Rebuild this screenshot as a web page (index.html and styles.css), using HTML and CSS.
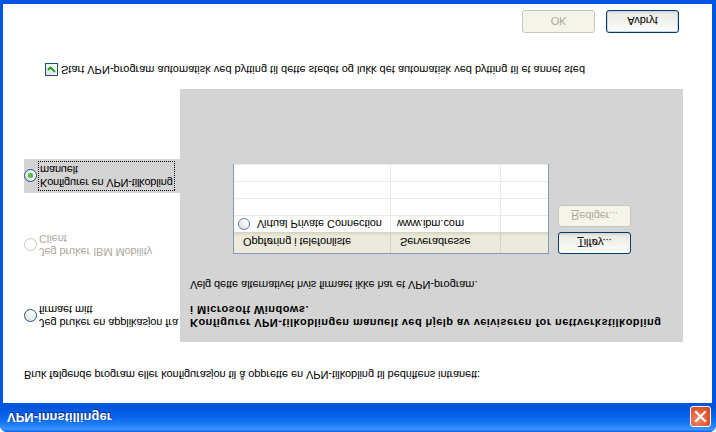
FILE: index.html
```html
<!DOCTYPE html>
<html>
<head>
<meta charset="utf-8">
<title>VPN-innstillinger</title>
<link rel="stylesheet" href="styles.css">
</head>
<body>
<div class="window">
  <div class="titlebar">
    <span class="title">VPN-innstillinger</span>
    <span class="close">
      <svg width="21" height="21" viewBox="0 0 21 21">
        <path d="M6 6 L15 15 M15 6 L6 15" stroke="#fff" stroke-width="2.2" stroke-linecap="square"/>
      </svg>
    </span>
  </div>
  <div class="content">
    <p class="intro">Bruk følgende program eller konfigurasjon til å opprette en VPN-tilkobling til bedriftens intranett:</p>
    <div class="main">
      <div class="options">
        <div class="opt opt1"><span class="radio"></span><span class="opt-text">Jeg bruker en applikasjon fra<br>firmaet mitt</span></div>
        <div class="opt opt2 disabled"><span class="radio"></span><span class="opt-text">Jeg bruker IBM Mobility<br>Client</span></div>
        <div class="opt opt3 selected"><span class="radio checked"></span><span class="opt-text focus">Konfigurer en VPN-tilkobling<br>manuelt</span></div>
      </div>
      <div class="panel">
        <p class="panel-title">Konfigurer VPN-tilkoblingen manuelt ved hjelp av veiviseren for nettverkstilkobling<br>i Microsoft Windows.</p>
        <p class="panel-desc">Velg dette alternativet hvis firmaet ikke har et VPN-program.</p>
        <div class="list-row">
          <div class="table">
            <div class="tr th">
              <div class="c c1">Oppføring i telefonliste</div>
              <div class="c c2">Serveradresse</div>
              <div class="c c3"></div>
            </div>
            <div class="tr">
              <div class="c c1"><span class="radio small"></span>Virtual Private Connection</div>
              <div class="c c2">www.ibm.com</div>
              <div class="c c3"></div>
            </div>
            <div class="tr"><div class="c c1"></div><div class="c c2"></div><div class="c c3"></div></div>
            <div class="tr"><div class="c c1"></div><div class="c c2"></div><div class="c c3"></div></div>
            <div class="tr"><div class="c c1"></div><div class="c c2"></div><div class="c c3"></div></div>
          </div>
          <div class="side-buttons">
            <button class="btn"><u>T</u>ilføy...</button>
            <button class="btn" disabled><u>R</u>ediger...</button>
          </div>
        </div>
      </div>
    </div>
    <div class="autostart"><span class="checkbox"><svg width="9" height="9" viewBox="0 0 9 9"><path d="M1 4 L3.5 6.5 L8 2" fill="none" stroke="#21a121" stroke-width="2"/></svg></span><span>Start VPN-program automatisk ved bytting til dette stedet og lukk det automatisk ved bytting til et annet sted</span></div>
    <div class="footer">
      <button class="btn" disabled>OK</button>
      <button class="btn default">Avbryt</button>
    </div>
  </div>
</div>
</body>
</html>
```
FILE: styles.css
```css
html, body {
  margin: 0;
  padding: 0;
}
body {
  width: 716px;
  height: 432px;
  overflow: hidden;
  background: #fff;
  transform: scaleY(-1);
  font-family: "Liberation Sans", Arial, sans-serif;
  font-size: 11px;
  letter-spacing: -0.08px;
  color: #000;
}
.window {
  width: 716px;
  height: 432px;
  box-sizing: border-box;
  display: flex;
  flex-direction: column;
  background: #0054e3;
  border-radius: 7px 7px 0 0;
  overflow: hidden;
}
.titlebar {
  height: 29px;
  flex: none;
  display: flex;
  align-items: center;
  justify-content: space-between;
  padding: 0 5px 0 7px;
  background: linear-gradient(to bottom, #0a5fe8 0%, #3d95ff 9%, #2b88fb 18%, #1373f3 35%, #0864ea 55%, #0058e3 75%, #0052d9 100%);
}
.title {
  color: #fff;
  font-weight: bold;
  font-size: 13px;
  letter-spacing: 0;
  text-shadow: 1px 1px 0 #0a2a8a;
}
.close {
  width: 21px;
  height: 21px;
  box-sizing: border-box;
  border: 1px solid #fff;
  border-radius: 3px;
  background: radial-gradient(circle at 35% 35%, #f08a6c 0%, #e35a34 55%, #c8411e 100%);
  display: flex;
  margin-top: 1px;
}
.close svg { margin: -1px; }
.content {
  flex: 1;
  background: #fff;
  margin: 0 4px 4px 3px;
  padding: 22px 0 0 21px;
  display: flex;
  flex-direction: column;
}
.intro {
  margin: 0;
  line-height: 13px;
}
.main {
  display: flex;
  margin-top: 26px;
  height: 253px;
}
.options {
  width: 156px;
  flex: none;
  display: flex;
  flex-direction: column;
}
.opt {
  display: flex;
  align-items: center;
  line-height: 13px;
}
.opt1 { margin-top: 13px; }
.opt2 { margin-top: 45px; }
.opt3 {
  margin-top: 39px;
  height: 34px;
  background: #d4d4d4;
}
.opt-text {
  margin-left: 2px;
  white-space: nowrap;
}
.focus {
  outline: 1px dotted #000;
  outline-offset: 1px;
  margin-left: 3px;
  letter-spacing: -0.2px;
}
.disabled { color: #aca899; }
.radio {
  width: 13px;
  height: 13px;
  box-sizing: border-box;
  border: 1px solid #1c5180;
  border-radius: 50%;
  background: linear-gradient(135deg, #dcdcd5 0%, #fff 80%);
  flex: none;
  position: relative;
}
.disabled .radio {
  border-color: #cac8bb;
  background: #fff;
}
.radio.checked::after {
  content: "";
  position: absolute;
  left: 3px;
  top: 3px;
  width: 5px;
  height: 5px;
  border-radius: 50%;
  background: radial-gradient(circle at 40% 40%, #55d451, #21a121);
}
.radio.small {
  width: 12px;
  height: 12px;
  margin-right: 7px;
  border-color: #5a7ea8;
}
.panel {
  flex: 1;
  margin-right: 29px;
  background: #d4d4d4;
  padding: 13px 0 0 10px;
  display: flex;
  flex-direction: column;
}
.panel-title {
  margin: 0;
  font-weight: bold;
  line-height: 13px;
  letter-spacing: 0.45px;
  white-space: nowrap;
}
.panel-desc {
  margin: 12px 0 0;
  line-height: 13px;
}
.list-row {
  display: flex;
  align-items: flex-start;
  margin: 24px 0 0 43px;
}
.table {
  width: 316px;
  height: 90px;
  box-sizing: border-box;
  border: 1px solid #7f9db9;
  background: #fff;
  display: flex;
  flex-direction: column;
}
.tr {
  display: flex;
  height: 17px;
  flex: none;
  border-bottom: 1px solid #ecebe3;
  box-sizing: border-box;
}
.tr.th {
  height: 21px;
  background: linear-gradient(to bottom, #ebeadb 0%, #ebeadb 80%, #e2decd 90%, #d6d2c2 100%);
  border-bottom: none;
}
.c {
  display: flex;
  align-items: center;
  box-sizing: border-box;
  white-space: nowrap;
  border-right: 1px solid #ecebe3;
}
.th .c {
  padding-left: 9px;
  border-right: 1px solid #d6d2c2;
}
.c1 { width: 157px; padding-left: 4px; }
.c2 { width: 110px; padding-left: 6px; }
.c3 { flex: 1; border-right: none; }
.th .c3 { border-right: none; }
.side-buttons {
  display: flex;
  flex-direction: column;
  gap: 5px;
  margin-left: 9px;
  margin-top: 0;
}
.btn {
  width: 73px;
  height: 22px;
  box-sizing: border-box;
  border: 1px solid #003c74;
  border-radius: 3px;
  background: linear-gradient(to bottom, #fff 0%, #f4f4f0 40%, #ecebe6 85%, #d6d0c5 100%);
  font-family: "Liberation Sans", Arial, sans-serif;
  font-size: 11px;
  color: #000;
  padding: 0;
  letter-spacing: -0.08px;
}
.btn u { text-decoration: underline; }
.btn:disabled {
  border-color: #c9c7ba;
  background: #f5f4ea;
  color: #aca899;
}
.btn.default {
  box-shadow: inset 0 0 0 1px #c4d4f0;
}
.autostart {
  display: flex;
  align-items: center;
  margin: 13px 0 0 21px;
  line-height: 13px;
  letter-spacing: 0;
}
.checkbox {
  width: 13px;
  height: 13px;
  box-sizing: border-box;
  border: 1px solid #1c5180;
  background: linear-gradient(135deg, #dcdcd5 0%, #fff 80%);
  display: flex;
  align-items: center;
  justify-content: center;
  margin-right: 3px;
  flex: none;
}
.footer {
  display: flex;
  justify-content: flex-end;
  gap: 11px;
  margin: 30px 33px 0 0;
}
.footer .btn { height: 23px; }
```
